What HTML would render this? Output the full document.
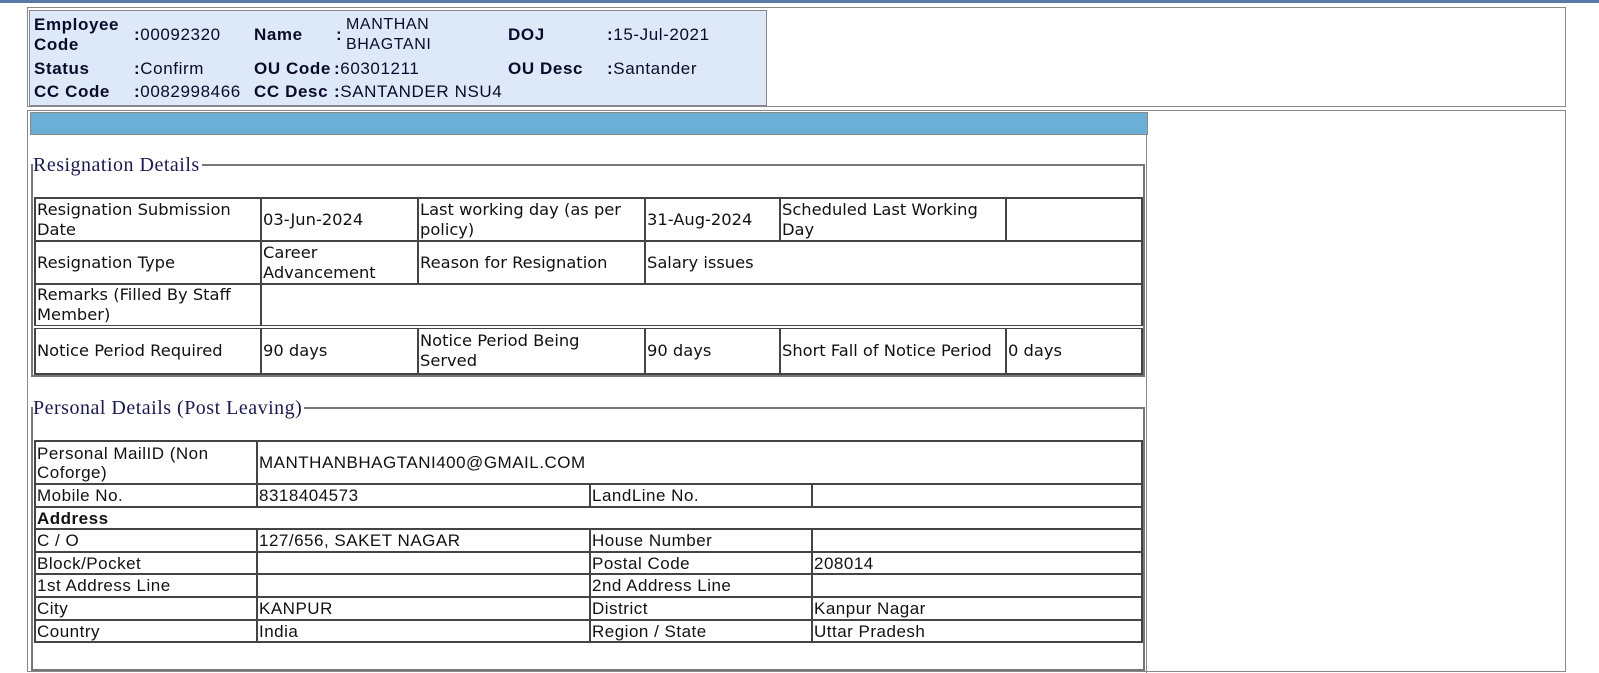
<!DOCTYPE html>
<html><head><style>
body{margin:0;width:1599px;height:656px;overflow:hidden;background:#fff;position:relative;font-family:"Liberation Sans",sans-serif;color:#000;}
.a{position:absolute;}
.top{left:0;top:0;width:1599px;height:3px;background:#5a78a8;}
.box1{left:27px;top:7px;width:1537px;height:98px;border:1px solid #888;}
.hdr{left:29px;top:10px;width:736px;height:94px;background:#dde9f8;border:1px solid #888;}
.h{position:absolute;font-size:17px;letter-spacing:0.6px;color:#0a0a2a;line-height:20px;white-space:nowrap;}
.b{font-weight:bold;}
.box2{left:27px;top:110px;width:1537px;height:560px;border:1px solid #888;}
.blue{left:30px;top:112px;width:1116px;height:21px;background:#6baed6;border:1px solid #888;}
.pane{left:30px;top:133px;width:1116px;height:540px;border-right:1px solid #888;}
.fs{border:2px solid #777;}
.leg{position:absolute;font-family:"Liberation Serif",serif;font-size:20px;letter-spacing:0.5px;color:#1a1a50;background:#fff;padding-right:2px;line-height:22px;}
table{position:absolute;border-collapse:collapse;}
td{border:2px solid #444;padding:0 1px;vertical-align:middle;}
.t1 td{font-family:"DejaVu Sans",sans-serif;font-size:16.3px;line-height:20px;color:#111;}
.t2 td{font-size:17px;letter-spacing:0.5px;line-height:19px;color:#111;padding:0 1px;}
</style></head><body>
<div class="a top"></div>
<div class="a box1"></div>
<div class="a hdr"></div>
<div class="h b" style="left:34px;top:15px">Employee<br>Code</div>
<div class="h" style="left:134px;top:25px"><b>:</b>00092320</div>
<div class="h b" style="left:254px;top:25px">Name</div>
<div class="h b" style="left:336px;top:25px">:</div>
<div class="h" style="left:346px;top:15px;font-size:16px">MANTHAN<br>BHAGTANI</div>
<div class="h b" style="left:508px;top:25px">DOJ</div>
<div class="h" style="left:607px;top:25px"><b>:</b>15-Jul-2021</div>
<div class="h b" style="left:34px;top:59px">Status</div>
<div class="h" style="left:134px;top:59px"><b>:</b>Confirm</div>
<div class="h b" style="left:254px;top:59px">OU Code</div>
<div class="h" style="left:334px;top:59px"><b>:</b>60301211</div>
<div class="h b" style="left:508px;top:59px">OU Desc</div>
<div class="h" style="left:607px;top:59px"><b>:</b>Santander</div>
<div class="h b" style="left:34px;top:82px">CC Code</div>
<div class="h" style="left:134px;top:82px"><b>:</b>0082998466</div>
<div class="h b" style="left:254px;top:82px">CC Desc</div>
<div class="h" style="left:334px;top:82px"><b>:</b>SANTANDER NSU4</div>

<div class="a box2"></div>
<div class="a pane"></div>
<div class="a blue"></div>

<div class="a fs" style="left:31px;top:164px;width:1110px;height:209px;"></div>
<div class="leg" style="left:33px;top:154px">Resignation Details</div>
<table class="t1" style="left:34px;top:197px;width:1109px;">
<tr style="height:43px"><td style="width:222px">Resignation Submission Date</td><td style="width:153px">03-Jun-2024</td><td style="width:223px">Last working day (as per policy)</td><td style="width:131px">31-Aug-2024</td><td style="width:222px">Scheduled Last Working Day</td><td></td></tr>
<tr style="height:43px"><td>Resignation Type</td><td>Career Advancement</td><td>Reason for Resignation</td><td colspan="3">Salary issues</td></tr>
<tr style="height:43px"><td>Remarks (Filled By Staff Member)</td><td colspan="5"></td></tr>
<tr style="height:47px;border-top:4px double #444"><td>Notice Period Required</td><td>90 days</td><td style="padding-right:30px">Notice Period Being Served</td><td>90 days</td><td>Short Fall of Notice Period</td><td>0 days</td></tr>
</table>

<div class="a fs" style="left:31px;top:407px;width:1110px;height:260px;"></div>
<div class="leg" style="left:33px;top:397px">Personal Details (Post Leaving)</div>
<table class="t2" style="left:34px;top:440px;width:1109px;">
<tr style="height:43px"><td style="width:218px">Personal MailID (Non Coforge)</td><td colspan="3">MANTHANBHAGTANI400@GMAIL.COM</td></tr>
<tr style="height:23px"><td>Mobile No.</td><td style="width:329px">8318404573</td><td style="width:218px">LandLine No.</td><td></td></tr>
<tr style="height:22px"><td colspan="4"><b>Address</b></td></tr>
<tr style="height:23px"><td>C / O</td><td>127/656, SAKET NAGAR</td><td>House Number</td><td></td></tr>
<tr style="height:22px"><td>Block/Pocket</td><td></td><td>Postal Code</td><td>208014</td></tr>
<tr style="height:23px"><td>1st Address Line</td><td></td><td>2nd Address Line</td><td></td></tr>
<tr style="height:23px"><td>City</td><td>KANPUR</td><td>District</td><td>Kanpur Nagar</td></tr>
<tr style="height:22px"><td>Country</td><td>India</td><td>Region / State</td><td>Uttar Pradesh</td></tr>
</table>
</body></html>
